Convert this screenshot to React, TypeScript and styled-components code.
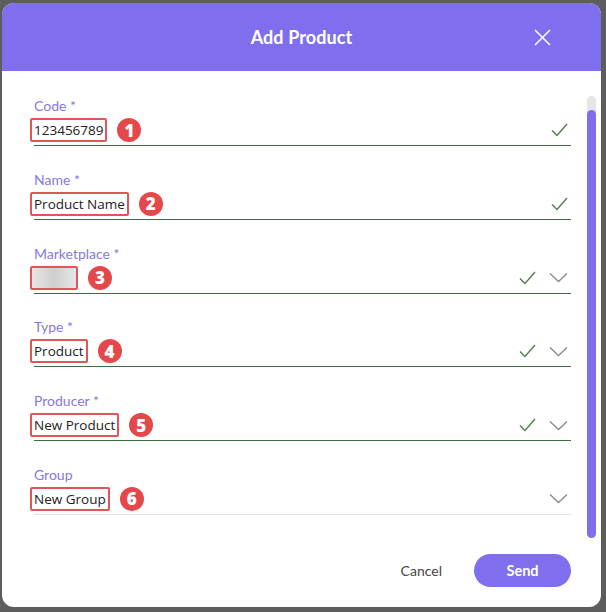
import styled, { createGlobalStyle } from 'styled-components';

const GlobalStyle = createGlobalStyle`
	html, body {
		margin: 0;
		padding: 0;
		background: #5d5d5d;
	}
	body {
		font-family: Lato, "Open Sans", sans-serif;
	}
`;

const Modal = styled.div`
	margin: 3px 0 0 2px;
	width: 599px;
	height: 604px;
	background: #ffffff;
	border-radius: 12px;
	overflow: hidden;
	display: flex;
	flex-direction: column;
`;

const Header = styled.div`
	height: 68px;
	background: #7f6fee;
	display: grid;
	grid-template-columns: 1fr auto 1fr;
	align-items: center;
`;

const Title = styled.h2`
	grid-column: 2;
	margin: 0;
	color: #ffffff;
	font-size: 18px;
	font-weight: 700;
	letter-spacing: 0.1px;
`;

const CloseButton = styled.button`
	grid-column: 3;
	justify-self: end;
	margin-right: 48px;
	width: 22px;
	height: 22px;
	padding: 0;
	border: none;
	background: transparent;
	display: flex;
	align-items: center;
	justify-content: center;
	cursor: pointer;
`;

const Body = styled.div`
	height: 471px;
	display: flex;
`;

const Fields = styled.div`
	padding: 26px 0 0 32px;
	width: 537px;
	display: flex;
	flex-direction: column;
	gap: 24.8px;
`;

const Field = styled.div`
	display: flex;
	flex-direction: column;
`;

const Label = styled.label`
	font-size: 14px;
	line-height: 18px;
	color: #8579dc;
`;

const InputRow = styled.div<{ $filled: boolean }>`
	height: 30px;
	display: flex;
	align-items: center;
	border-bottom: 1px solid ${({ $filled }) => ($filled ? '#3f6d3f' : '#e4e4e4')};
`;

const Value = styled.span<{ $blurred?: boolean }>`
	margin-left: -4px;
	height: 20px;
	padding: 0 2px;
	border: 2px solid #df5659;
	border-radius: 2px;
	font-family: "Open Sans", sans-serif;
	font-size: 13.5px;
	line-height: 20px;
	color: #222222;
	${({ $blurred }) =>
		$blurred &&
		`
		width: 40px;
		background: linear-gradient(90deg, #e6e6e6, #cfcfcf 50%, #e6e6e6);
	`}
`;

const Badge = styled.span`
	margin-left: 10px;
	width: 24px;
	height: 24px;
	border-radius: 50%;
	background: #e5484b;
	color: #ffffff;
	font-family: "Open Sans", sans-serif;
	font-weight: 800;
	font-size: 17px;
	display: flex;
	align-items: center;
	justify-content: center;
`;

const Icons = styled.div`
	margin-left: auto;
	margin-right: 3px;
	display: flex;
	align-items: center;
	gap: 13px;
`;

const Scrollbar = styled.div`
	margin: 25px 0 4px 16px;
	width: 9px;
	border-radius: 5px;
	background: #e6e6e6;
	display: flex;
	flex-direction: column;
	padding-top: 14px;
`;

const Thumb = styled.div`
	flex: 1;
	border-radius: 5px;
	background: #7f6fee;
`;

const Footer = styled.div`
	padding: 12px 30px 0 0;
	display: flex;
	justify-content: flex-end;
	align-items: center;
	gap: 32px;
`;

const CancelButton = styled.button`
	border: none;
	background: transparent;
	padding: 0;
	font-family: Lato, sans-serif;
	font-size: 14px;
	color: #454545;
	cursor: pointer;
`;

const SendButton = styled.button`
	width: 97px;
	height: 33px;
	border: none;
	border-radius: 17px;
	background: #7f6fee;
	color: #ffffff;
	font-family: Lato, sans-serif;
	font-size: 14.5px;
	font-weight: 700;
	cursor: pointer;
`;

const Check = () => (
	<svg width="17" height="14" viewBox="0 0 17 14" fill="none">
		<path d="M1 7.5 L6 12.5 L16 1" stroke="#4f7d4f" strokeWidth="1.4" />
	</svg>
);

const Chevron = () => (
	<svg width="19" height="11" viewBox="0 0 19 11" fill="none">
		<path d="M1 1.5 L9.5 9.5 L18 1.5" stroke="#8a8a8a" strokeWidth="1.3" />
	</svg>
);

interface FieldData {
	label: string;
	value: string;
	num: number;
	valid: boolean;
	select: boolean;
	blurred?: boolean;
}

const fields: FieldData[] = [
	{ label: 'Code *', value: '123456789', num: 1, valid: true, select: false },
	{ label: 'Name *', value: 'Product Name', num: 2, valid: true, select: false },
	{ label: 'Marketplace *', value: '', num: 3, valid: true, select: true, blurred: true },
	{ label: 'Type *', value: 'Product', num: 4, valid: true, select: true },
	{ label: 'Producer *', value: 'New Product', num: 5, valid: true, select: true },
	{ label: 'Group', value: 'New Group', num: 6, valid: false, select: true },
];

function App() {
	return (
		<>
			<GlobalStyle />
			<Modal>
				<Header>
					<Title>Add Product</Title>
					<CloseButton aria-label="Close">
						<svg width="17" height="17" viewBox="0 0 17 17" fill="none">
							<path d="M1 1 L16 16 M16 1 L1 16" stroke="#ffffff" strokeWidth="1.5" />
						</svg>
					</CloseButton>
				</Header>
				<Body>
					<Fields>
						{fields.map((f) => (
							<Field key={f.num}>
								<Label>{f.label}</Label>
								<InputRow $filled={f.valid}>
									<Value $blurred={f.blurred}>{f.value}</Value>
									<Badge>{f.num}</Badge>
									<Icons>
										{f.valid && <Check />}
										{f.select && <Chevron />}
									</Icons>
								</InputRow>
							</Field>
						))}
					</Fields>
					<Scrollbar>
						<Thumb />
					</Scrollbar>
				</Body>
				<Footer>
					<CancelButton>Cancel</CancelButton>
					<SendButton>Send</SendButton>
				</Footer>
			</Modal>
		</>
	);
}

export default App;
